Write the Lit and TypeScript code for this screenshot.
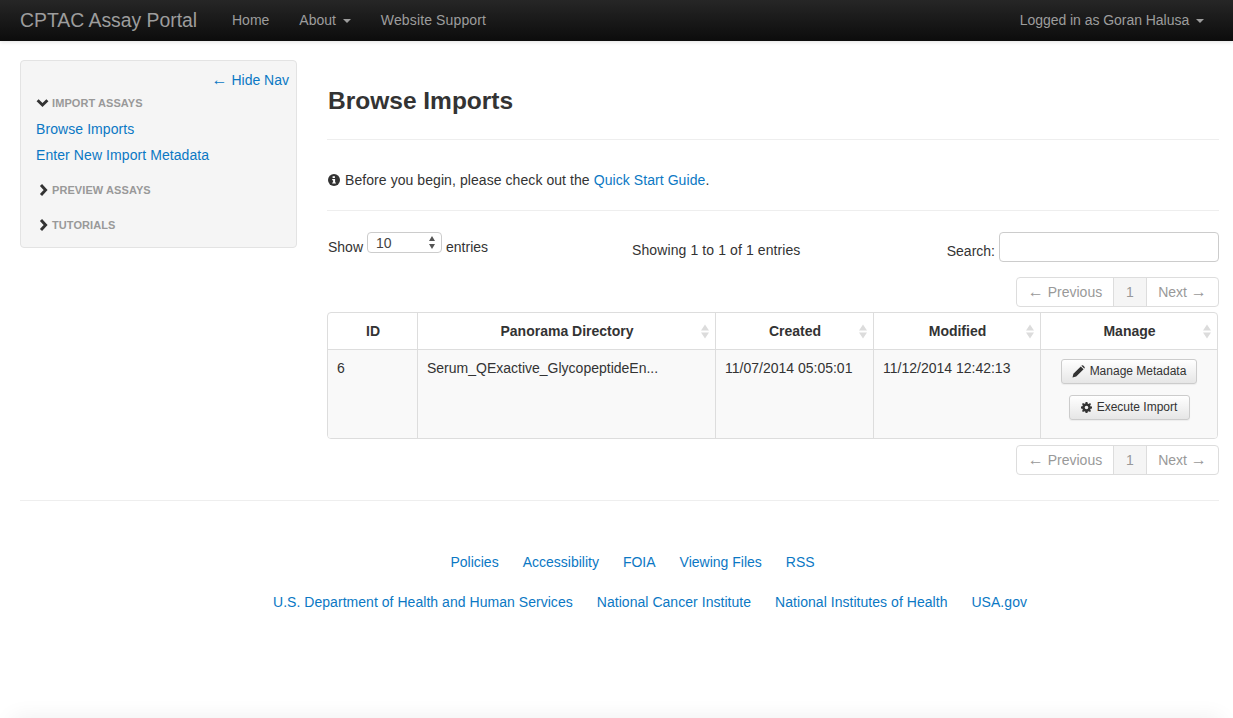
import { LitElement, html, css, svg } from "lit";
import { customElement } from "lit/decorators.js";

const chevDown = html`<svg class="chev" width="13" height="10" viewBox="0 0 13 10"><path d="M1.6 2.2 L6.5 7 L11.4 2.2" fill="none" stroke="#333" stroke-width="2.9"/></svg>`;
const chevRight = html`<svg class="chev" width="13" height="12" viewBox="0 0 13 12"><path d="M5 1 L9.6 6 L5 11" fill="none" stroke="#333" stroke-width="2.9"/></svg>`;
const info = html`<svg class="info" width="12" height="12" viewBox="0 0 12 12"><circle cx="6" cy="6" r="6" fill="#333"/><path d="M4.6 2.3h2.3v1.6H4.6zM4.2 5h2.9v3.4h.8v1.2H4.2V8.4h.9V6.2h-.9z" fill="#fff"/></svg>`;
const pencil = html`<svg class="ic" width="13" height="13" viewBox="0 0 13 13"><path d="M0.5 12.5 L1.4 8.8 L8.8 1.4 L11.6 4.2 L4.2 11.6 Z M9.6 0.6 Q10.4 -0.1 11.2 0.6 L12.4 1.8 Q13.1 2.6 12.4 3.4 L12.2 3.6 L9.4 0.8 Z" fill="#333"/></svg>`;
const cog = html`<svg class="ic" width="11" height="11" viewBox="0 0 12 12"><path fill-rule="evenodd" fill="#333" d="M5 0h2l.3 1.6 1.1.5L9.8 1.2l1.1 1.1-.9 1.4.5 1.1L12 5v2l-1.5.3-.5 1.1.9 1.4-1.1 1.1-1.4-.9-1.1.5L7 12H5l-.3-1.5-1.1-.5-1.4.9-1.1-1.1.9-1.4-.5-1.1L0 7V5l1.5-.3.5-1.1-.9-1.4 1.1-1.1 1.4.9 1.1-.5z M6 4a2 2 0 1 0 0 4a2 2 0 1 0 0-4z"/></svg>`;
const sort = svg`<svg class="sort" width="10" height="15" viewBox="0 0 10 15"><path d="M5 0.5 L9 6.5 H1 Z M1 8.5 H9 L5 14.5 Z" fill="#dcdcdc"/></svg>`;

const pager = html`<div class="pager-row"><div class="pager">
  <span class="pg prev"><span class="arrow">←</span> Previous</span><span class="pg cur">1</span><span class="pg next">Next <span class="arrow">→</span></span>
</div></div>`;

@customElement("app-root")
export class AppRoot extends LitElement {
  static styles = css`
    :host { display: block; font-family: "Liberation Sans", Arial, sans-serif; font-size: 14px; line-height: 20px; color: #333; }
    * { box-sizing: border-box; }
    a { color: #0b78c4; text-decoration: none; }
    .page { height: 718px; overflow: hidden; display: flex; flex-direction: column; background: #fff; }
    .nav { height: 41px; flex: none; background: linear-gradient(#262626, #0c0c0c); box-shadow: 0 1px 4px rgba(0,0,0,.12); display: flex; align-items: center; padding: 0 29px 2px 20px; color: #9d9d9d; }
    .brand { font-size: 19.4px; width: 212px; letter-spacing: -.02px; }
    .nav-item { margin-right: 30px; }
    .support { letter-spacing: .13px; }
    .user { letter-spacing: -.04px; }
    .spacer { flex: 1; }
    .caret { display: inline-block; width: 0; height: 0; margin-left: 3px; vertical-align: middle; border-top: 4px solid #9d9d9d; border-left: 4px solid transparent; border-right: 4px solid transparent; }
    .body { display: flex; padding: 19px 14px 0 20px; gap: 30px; flex: none; }
    .side { width: 277px; height: 188px; flex: none; background: #f5f5f5; border: 1px solid #e3e3e3; border-radius: 4px; padding: 9px 7px 0 15px; }
    .hide { text-align: right; }
    .sec { display: flex; align-items: center; font-size: 11px; line-height: 14px; font-weight: 700; color: #999; letter-spacing: .08px; }
    .sec1 { margin-top: 6px; }
    .sec2 { margin-top: 18px; }
    .sec3 { margin-top: 21px; }
    .chev { margin-right: 3px; flex: none; }
    .side-link { display: block; margin-top: 6px; letter-spacing: .08px; }
    .side-link.first { margin-top: 9px; }
    .main { flex: 1; min-width: 0; }
    .title { height: 80px; border-bottom: 1px solid #eee; padding: 21px 0 0 1px; }
    h1 { margin: 0; font-size: 24.5px; line-height: 40px; font-weight: 700; }
    .note { height: 71px; border-bottom: 1px solid #eee; display: flex; align-items: center; gap: 5px; padding-top: 10px; padding-left: 1px; letter-spacing: .07px; }
    .info { flex: none; }
    .controls { display: flex; height: 66px; align-items: flex-start; }
    .show { display: flex; align-items: center; gap: 4px; width: 305px; padding: 25px 0 0 1px; }
    .sel { width: 75px; height: 21px; border: 1px solid #ccc; border-radius: 4px; background: #fff; display: flex; align-items: center; justify-content: space-between; padding: 0 6px 0 8px; position: relative; top: -4px; color: #444; }
    .info-text { padding-top: 29px; letter-spacing: .1px; }
    .search { margin-left: auto; display: flex; align-items: flex-start; gap: 4px; padding-top: 21px; }
    .search-label { padding-top: 9px; }
    .search-box { width: 220px; height: 30px; border: 1px solid #ccc; border-radius: 4px; background: #fff; }
    .pager-row { display: flex; justify-content: flex-end; }
    .pager { display: flex; height: 30px; border: 1px solid #ddd; border-radius: 4px; color: #999; }
    .pg { line-height: 28px; text-align: center; }
    .arrow { font-size: 16px; line-height: 1; }
    .prev { width: 96px; }
    .cur { width: 34px; background: #f5f5f5; border-left: 1px solid #ddd; border-right: 1px solid #ddd; }
    .next { width: 71px; }
    .grid { margin: 5px 1px 6px 0; border: 1px solid #ddd; border-radius: 4px; height: 127px; display: grid; grid-template-columns: 89px 298px 158px 167px 1fr; grid-template-rows: 37px 1fr; overflow: hidden; }
    .th { position: relative; font-weight: 700; display: flex; align-items: center; justify-content: center; border-left: 1px solid #ddd; border-bottom: 1px solid #ddd; padding: 0 0 1px 1px; }
    .td { background: #f9f9f9; border-left: 1px solid #ddd; padding: 8px 8px 8px 9px; }
    .th:first-child, .td.id { border-left: 0; }
    .sort { position: absolute; right: 5px; top: 11px; }
    .manage { display: flex; flex-direction: column; align-items: center; gap: 11px; padding: 9px 0 0; }
    .btn { height: 25px; display: flex; align-items: center; gap: 5px; border: 1px solid #ccc; border-radius: 3px; background: linear-gradient(#fff, #e6e6e6); font-size: 12px; color: #333; box-shadow: 0 1px 1px rgba(0,0,0,.05); justify-content: center; padding-bottom: 2px; }
    .b1 { width: 136px; }
    .b2 { width: 121px; }
    .ic { position: relative; top: 1px; }
    .rule { height: 1px; background: #eee; margin: 25px 14px 0 20px; flex: none; }
    .links { display: flex; justify-content: center; gap: 24px; flex: none; }
    .l1 { margin-top: 51px; padding-left: 32px; }
    .l2 { margin-top: 20px; padding-left: 67px; letter-spacing: .04px; }
    .fill { flex: 1; }
    .bottom { height: 20px; flex: none; margin: 0 12px -20px; box-shadow: 0 0 22px rgba(0,0,0,.07); }
  `;

  render() {
    return html`<div class="page">
      <div class="nav">
        <span class="brand">CPTAC Assay Portal</span>
        <span class="nav-item">Home</span>
        <span class="nav-item">About <span class="caret"></span></span>
        <span class="nav-item support">Website Support</span>
        <span class="spacer"></span>
        <span class="user">Logged in as Goran Halusa <span class="caret"></span></span>
      </div>
      <div class="body">
        <div class="side">
          <div class="hide"><a href="#"><span class="arrow">←</span> Hide Nav</a></div>
          <div class="sec sec1">${chevDown}IMPORT ASSAYS</div>
          <a class="side-link first" href="#">Browse Imports</a>
          <a class="side-link" href="#">Enter New Import Metadata</a>
          <div class="sec sec2">${chevRight}PREVIEW ASSAYS</div>
          <div class="sec sec3">${chevRight}TUTORIALS</div>
        </div>
        <div class="main">
          <div class="title"><h1>Browse Imports</h1></div>
          <div class="note">${info}<span>Before you begin, please check out the <a href="#">Quick Start Guide</a>.</span></div>
          <div class="controls">
            <div class="show">Show <span class="sel">10
              <svg width="6" height="13" viewBox="0 0 6 13"><path d="M3 0 L6 5 H0 Z M0 8 H6 L3 13 Z" fill="#555"/></svg></span> entries</div>
            <div class="info-text">Showing 1 to 1 of 1 entries</div>
            <div class="search"><span class="search-label">Search:</span><span class="search-box"></span></div>
          </div>
          ${pager}
          <div class="grid">
            <div class="th">ID</div>
            <div class="th">Panorama Directory ${sort}</div>
            <div class="th">Created ${sort}</div>
            <div class="th">Modified ${sort}</div>
            <div class="th">Manage ${sort}</div>
            <div class="td id">6</div>
            <div class="td">Serum_QExactive_GlycopeptideEn...</div>
            <div class="td">11/07/2014 05:05:01</div>
            <div class="td">11/12/2014 12:42:13</div>
            <div class="td manage">
              <span class="btn b1">${pencil}Manage Metadata</span>
              <span class="btn b2">${cog}Execute Import</span>
            </div>
          </div>
          ${pager}
        </div>
      </div>
      <div class="rule"></div>
      <div class="links l1"><a href="#">Policies</a><a href="#">Accessibility</a><a href="#">FOIA</a><a href="#">Viewing Files</a><a href="#">RSS</a></div>
      <div class="links l2"><a href="#">U.S. Department of Health and Human Services</a><a href="#">National Cancer Institute</a><a href="#">National Institutes of Health</a><a href="#">USA.gov</a></div>
      <div class="fill"></div>
      <div class="bottom"></div>
    </div>`;
  }
}
